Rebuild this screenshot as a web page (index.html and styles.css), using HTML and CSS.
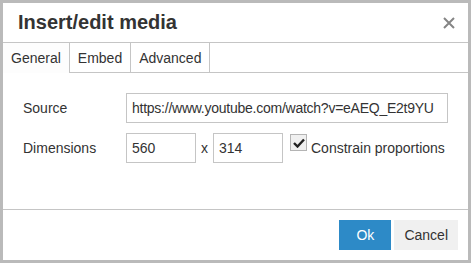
FILE: index.html
```html
<!DOCTYPE html>
<html lang="en">
<head>
    <meta name="viewport" content="width=device-width, initial-scale=1">
    <title>Insert/edit media</title>
    <link rel="stylesheet" href="styles.css">
</head>
<body>
    <div class="dialog">
        <div class="dialog-head">
            <span class="dialog-title">Insert/edit media</span>
            <svg class="close" width="12" height="12" viewBox="0 0 12 12">
                <path d="M1 1 L11 11 M11 1 L1 11" stroke="#858585" stroke-width="2"/>
            </svg>
        </div>

        <div class="tabs">
            <div class="tab active">General</div>
            <div class="tab">Embed</div>
            <div class="tab">Advanced</div>
        </div>

        <div class="panel">
            <label class="label" for="source">Source</label>
            <input class="field url" type="text" id="source" value="https://www.youtube.com/watch?v=eAEQ_E2t9YU">

            <label class="label" for="width">Dimensions</label>
            <div class="dims">
                <input class="field small" type="text" id="width" value="560">
                <span class="times">x</span>
                <input class="field small" type="text" id="height" value="314">
                <span class="check">
                    <svg width="12" height="10" viewBox="0 0 12 10">
                        <path d="M1 5 L4.5 8.5 L11 1.5" stroke="#222" stroke-width="2.4" fill="none"/>
                    </svg>
                </span>
                <span class="check-label">Constrain proportions</span>
            </div>
        </div>

        <div class="footer">
            <button class="btn primary">Ok</button>
            <button class="btn">Cancel</button>
        </div>
    </div>
</body>
</html>
```

FILE: styles.css
```css
body {
    margin: 0;
    background-color: #bababa;
    font-family: "Liberation Sans", Arial, sans-serif;
    color: #333;
}

.dialog {
    margin: 3px;
    width: 465px;
    height: 257px;
    background-color: #fff;
    display: flex;
    flex-direction: column;
}

.dialog-head {
    height: 39px;
    border-bottom: 1px solid #c5c5c5;
    display: flex;
    align-items: center;
    justify-content: space-between;
    padding: 0 13px 0 15px;
}

.dialog-title {
    font-size: 20px;
    font-weight: bold;
    color: #333;
}

.tabs {
    display: flex;
    height: 29px;
    border-bottom: 1px solid #c5c5c5;
}

.tab {
    padding: 0 8px;
    line-height: 30px;
    font-size: 14px;
    border-right: 1px solid #c5c5c5;
}

.tab.active {
    background-color: #fdfdfd;
    height: 30px;
}

.panel {
    flex: 1;
    padding: 20px;
    border-bottom: 1px solid #c5c5c5;
    display: grid;
    grid-template-columns: 103px 1fr;
    grid-auto-rows: 30px;
    row-gap: 10px;
    align-items: center;
    align-content: start;
}

.label {
    font-size: 14px;
}

.field {
    box-sizing: border-box;
    height: 30px;
    border: 1px solid #c5c5c5;
    padding: 0 5px;
    font-family: inherit;
    font-size: 14px;
    color: #333;
    width: 100%;
    outline: none;
}

.field.url {
    letter-spacing: -0.25px;
}

.dims {
    display: flex;
    align-items: center;
}

.field.small {
    width: 70px;
}

.times {
    font-size: 14px;
    width: 17px;
    text-align: center;
}

.check {
    box-sizing: border-box;
    width: 17px;
    height: 17px;
    margin: 1px 4px 0 7px;
    align-self: flex-start;
    border: 1px solid #b4b4b4;
    background-color: #f0f0f0;
    display: flex;
    align-items: center;
    justify-content: center;
}

.check-label {
    font-size: 14px;
}

.footer {
    height: 50px;
    padding: 0 10px;
    display: flex;
    align-items: center;
    justify-content: flex-end;
    gap: 3px;
}

.btn {
    height: 30px;
    border: none;
    padding: 0 10px;
    font-family: inherit;
    font-size: 14px;
    color: #333;
    background-color: #f0f0f0;
}

.btn.primary {
    width: 52px;
    background-color: #2d8ac7;
    color: #fff;
}
```
